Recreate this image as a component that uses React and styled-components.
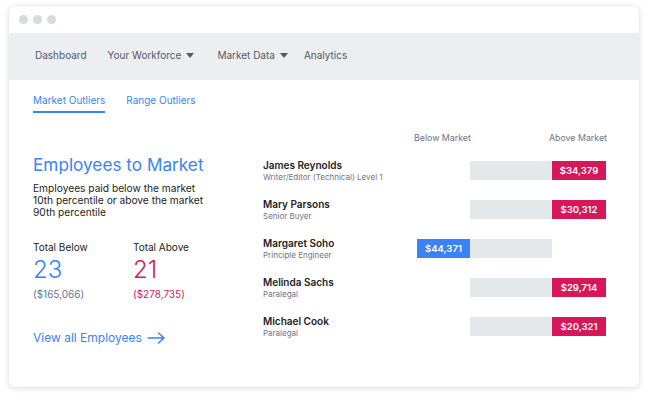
import styled, { createGlobalStyle } from 'styled-components';

const GlobalStyle = createGlobalStyle`
	* { box-sizing: border-box; }
	body {
		margin: 0;
		background: #ffffff;
		font-family: Inter, "Noto Sans", sans-serif;
	}
`

const Page = styled.div`
	width: 648px;
	height: 400px;
	padding: 6px 9px 13px 9px;
`
const Window = styled.div`
	height: 381px;
	background: #fff;
	border-radius: 6px;
	box-shadow: 0 1px 6px rgba(30, 40, 60, 0.16), 0 0 1px rgba(30, 40, 60, 0.12);
	overflow: hidden;
	display: flex;
	flex-direction: column;
`
const TitleBar = styled.div`
	height: 27px;
	display: flex;
	align-items: center;
	gap: 5px;
	padding-left: 10px;
`
const Dot = styled.span`
	width: 9px;
	height: 9px;
	border-radius: 50%;
	background: #d7dbe0;
`
const Nav = styled.nav`
	height: 47px;
	background: #eceef0;
	display: flex;
	align-items: center;
	padding: 0 0 3px 26px;
`
const NavItem = styled.span`
	font-size: 10px;
	color: #4f5a6b;
	display: flex;
	align-items: center;
	gap: 5px;
	margin-right: ${p => p.$gap || 21}px;
`
const Caret = styled.span`
	width: 0;
	height: 0;
	border-left: 4px solid transparent;
	border-right: 4px solid transparent;
	border-top: 5px solid #4f5a6b;
`
const Tabs = styled.div`
	display: flex;
	gap: 21px;
	padding: 13px 0 0 24px;
`
const Tab = styled.div`
	font-size: 10px;
	line-height: 14px;
	color: #3b82f6;
	padding-bottom: 4px;
	border-bottom: 2px solid ${p => (p.$active ? '#3b82f6' : 'transparent')};
`
const Main = styled.div`
	display: flex;
	padding-left: 24px;
`
const Summary = styled.div`
	width: 230px;
	padding-top: 40px;
	display: flex;
	flex-direction: column;
`
const Heading = styled.h1`
	margin: 0;
	font-size: 17.2px;
	line-height: 24px;
	font-weight: 400;
	color: #3b82f6;
`
const Description = styled.p`
	margin: 5px 0 0 0;
	font-size: 10.2px;
	line-height: 12px;
	color: #222;
	width: 180px;
`
const Stats = styled.div`
	display: flex;
	margin-top: 22px;
`
const Stat = styled.div`
	width: 100px;
	display: flex;
	flex-direction: column;
`
const StatLabel = styled.div`
	font-size: 10px;
	line-height: 14px;
	color: #222;
`
const StatValue = styled.div`
	font-size: 24px;
	line-height: 28px;
	font-weight: 300;
	margin-top: 2px;
	color: ${p => p.$color};
`
const StatAmount = styled.div`
	font-size: 10px;
	line-height: 14px;
	margin-top: 3px;
	color: ${p => p.$color};
`
const ViewAll = styled.a`
	margin-top: 28px;
	font-size: 12px;
	line-height: 18px;
	color: #3b82f6;
	display: flex;
	align-items: center;
	gap: 5px;
`
const Chart = styled.div`
	padding-top: 19px;
	display: flex;
	flex-direction: column;
`
const ChartGrid = styled.div`
	display: grid;
	grid-template-columns: 154px 53px 82px 54px;
	align-items: center;
`
const HeaderLabel = styled.div`
	font-size: 8.8px;
	line-height: 12px;
	color: #6b7589;
	text-align: center;
	white-space: nowrap;
	margin-left: -3px;
	grid-column: ${p => p.$col};
`
const Headers = styled(ChartGrid)`
	margin-bottom: 7px;
`
const Row = styled(ChartGrid)`
	height: 39px;
	grid-template-rows: 39px;
`
const Person = styled.div`
	display: flex;
	flex-direction: column;
	grid-row: 1;
	grid-column: 1;
`
const Name = styled.div`
	font-size: 10px;
	line-height: 13px;
	font-weight: 600;
	color: #222;
`
const Role = styled.div`
	font-size: 8px;
	line-height: 11px;
	color: #6b7589;
`
const Track = styled.div`
	height: 19px;
	background: #e5e8eb;
	grid-column: 3;
	grid-row: 1;
`
const Amount = styled.div`
	height: 19px;
	display: flex;
	align-items: center;
	justify-content: center;
	font-size: 9.5px;
	font-weight: 600;
	color: #fff;
	background: ${p => (p.$above ? '#d6185a' : '#3b82f6')};
	grid-column: ${p => (p.$above ? 4 : 2)};
	grid-row: 1;
`

const people = [
	{ name: 'James Reynolds', role: 'Writer/Editor (Technical) Level 1', amount: '$34,379', above: true },
	{ name: 'Mary Parsons', role: 'Senior Buyer', amount: '$30,312', above: true },
	{ name: 'Margaret Soho', role: 'Principle Engineer', amount: '$44,371', above: false },
	{ name: 'Melinda Sachs', role: 'Paralegal', amount: '$29,714', above: true },
	{ name: 'Michael Cook', role: 'Paralegal', amount: '$20,321', above: true },
]

export default function App() {
	return (
		<Page>
			<GlobalStyle />
			<Window>
				<TitleBar>
					<Dot />
					<Dot />
					<Dot />
				</TitleBar>
				<Nav>
					<NavItem $gap={21}>Dashboard</NavItem>
					<NavItem $gap={23}>Your Workforce <Caret /></NavItem>
					<NavItem $gap={16}>Market Data <Caret /></NavItem>
					<NavItem>Analytics</NavItem>
				</Nav>
				<Tabs>
					<Tab $active>Market Outliers</Tab>
					<Tab>Range Outliers</Tab>
				</Tabs>
				<Main>
					<Summary>
						<Heading>Employees to Market</Heading>
						<Description>
							Employees paid below the market 10th percentile or above the market 90th percentile
						</Description>
						<Stats>
							<Stat>
								<StatLabel>Total Below</StatLabel>
								<StatValue $color="#3b82f6">23</StatValue>
								<StatAmount $color="#6b7589">($165,066)</StatAmount>
							</Stat>
							<Stat>
								<StatLabel>Total Above</StatLabel>
								<StatValue $color="#d6185a">21</StatValue>
								<StatAmount $color="#d6185a">($278,735)</StatAmount>
							</Stat>
						</Stats>
						<ViewAll>
							View all Employees
							<svg width="18" height="12" viewBox="0 0 18 12" fill="none" stroke="#3b82f6" strokeWidth="1.5" strokeLinecap="round" strokeLinejoin="round">
								<path d="M1 6h16M11.5 1l5.5 5-5.5 5" />
							</svg>
						</ViewAll>
					</Summary>
					<Chart>
						<Headers>
							<HeaderLabel $col={2}>Below Market</HeaderLabel>
							<HeaderLabel $col={4}>Above Market</HeaderLabel>
						</Headers>
						{people.map(p => (
							<Row key={p.name}>
								<Person>
									<Name>{p.name}</Name>
									<Role>{p.role}</Role>
								</Person>
								<Track />
								<Amount $above={p.above}>{p.amount}</Amount>
							</Row>
						))}
					</Chart>
				</Main>
			</Window>
		</Page>
	);
}
